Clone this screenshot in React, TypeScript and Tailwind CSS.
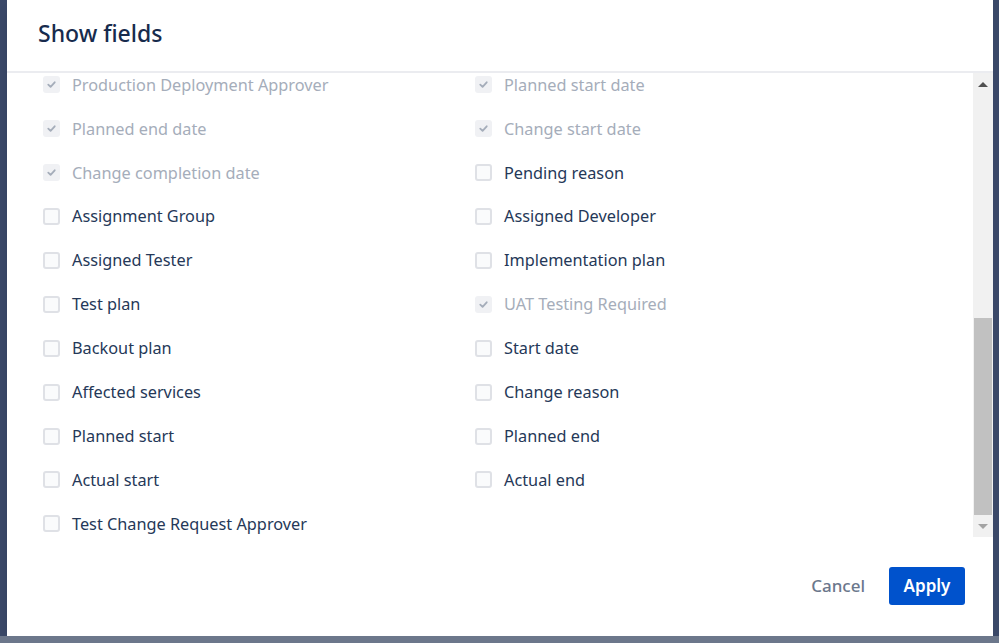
import React from "react";

type Field = { label: string; disabled?: boolean };

const left: Field[] = [
  { label: "Production Deployment Approver", disabled: true },
  { label: "Planned end date", disabled: true },
  { label: "Change completion date", disabled: true },
  { label: "Assignment Group" },
  { label: "Assigned Tester" },
  { label: "Test plan" },
  { label: "Backout plan" },
  { label: "Affected services" },
  { label: "Planned start" },
  { label: "Actual start" },
  { label: "Test Change Request Approver" },
];

const right: Field[] = [
  { label: "Planned start date", disabled: true },
  { label: "Change start date", disabled: true },
  { label: "Pending reason" },
  { label: "Assigned Developer" },
  { label: "Implementation plan" },
  { label: "UAT Testing Required", disabled: true },
  { label: "Start date" },
  { label: "Change reason" },
  { label: "Planned end" },
  { label: "Actual end" },
];

// disabled rows are the locked, already-checked fields
function Row({ label, disabled }: Field) {
  return (
    <div className="flex h-[43.9px] items-center gap-[12px]">
      {disabled ? (
        <span className="flex h-[17px] w-[17px] items-center justify-center rounded-[3px] bg-[#f0f1f4]">
          <svg width="11" height="11" viewBox="0 0 12 12" fill="none">
            <path d="M2.5 6.2 L5 8.6 L9.5 3.6" stroke="#a5adba" strokeWidth="2" strokeLinecap="round" strokeLinejoin="round" />
          </svg>
        </span>
      ) : (
        <span className="h-[17px] w-[17px] rounded-[3px] border-2 border-[#dfe1e6] bg-[#fafbfc]" />
      )}
      <span className={disabled ? "text-[#a5adba]" : "text-[#253858]"}>{label}</span>
    </div>
  );
}

export default function App() {
  return (
    <div
      className="flex h-[643px] w-[999px] flex-col overflow-hidden bg-[#3b4866]"
      style={{ fontFamily: '"Noto Sans", "Open Sans", sans-serif' }}
    >
      <div className="flex h-[636px]">
        <div className="w-[7px] bg-[#3a4868]" />
        {/* Modal */}
        <div className="flex w-[986px] flex-col bg-white shadow-lg">
          <div className="flex h-[73px] items-center border-b-2 border-[#ebecf0] pb-[5px] pl-[31px]">
            <h2 className="text-[23px] font-medium text-[#172b4d]">Show fields</h2>
          </div>

          {/* Scrolling list */}
          <div className="flex h-[464px] overflow-hidden">
            <div className="flex-1 overflow-hidden pl-[36px]">
              <div className="-mt-[10px] grid grid-cols-[432px_432px] text-[16.3px]">
                <div>
                  {left.map((f) => (
                    <Row key={f.label} {...f} />
                  ))}
                </div>
                <div>
                  {right.map((f) => (
                    <Row key={f.label} {...f} />
                  ))}
                </div>
              </div>
            </div>
            {/* Scrollbar */}
            <div className="flex w-[20px] flex-col items-center bg-[#f1f1f1]">
              <div className="flex h-[22px] items-center justify-center">
                <div className="h-0 w-0 border-x-[5px] border-b-[5px] border-x-transparent border-b-[#505050]" />
              </div>
              <div className="h-[223px]" />
              <div className="w-[18px] flex-1 bg-[#c1c1c1]" />
              <div className="flex h-[22px] items-center justify-center">
                <div className="h-0 w-0 border-x-[5px] border-t-[5px] border-x-transparent border-t-[#a3a3a3]" />
              </div>
            </div>
          </div>

          {/* Footer */}
          <div className="flex flex-1 items-start justify-end gap-[24px] pr-[28px] pt-[30px]">
            <button className="h-[38px] text-[17px] font-medium text-[#6b778c]">Cancel</button>
            <button className="h-[38px] w-[76px] rounded-[3px] bg-[#0052cc] text-[17px] font-semibold text-white">
              Apply
            </button>
          </div>
        </div>
        <div className="flex-1 bg-[#3a4868]" />
      </div>
      <div className="flex-1 bg-[#6c778b]" />
    </div>
  );
}
